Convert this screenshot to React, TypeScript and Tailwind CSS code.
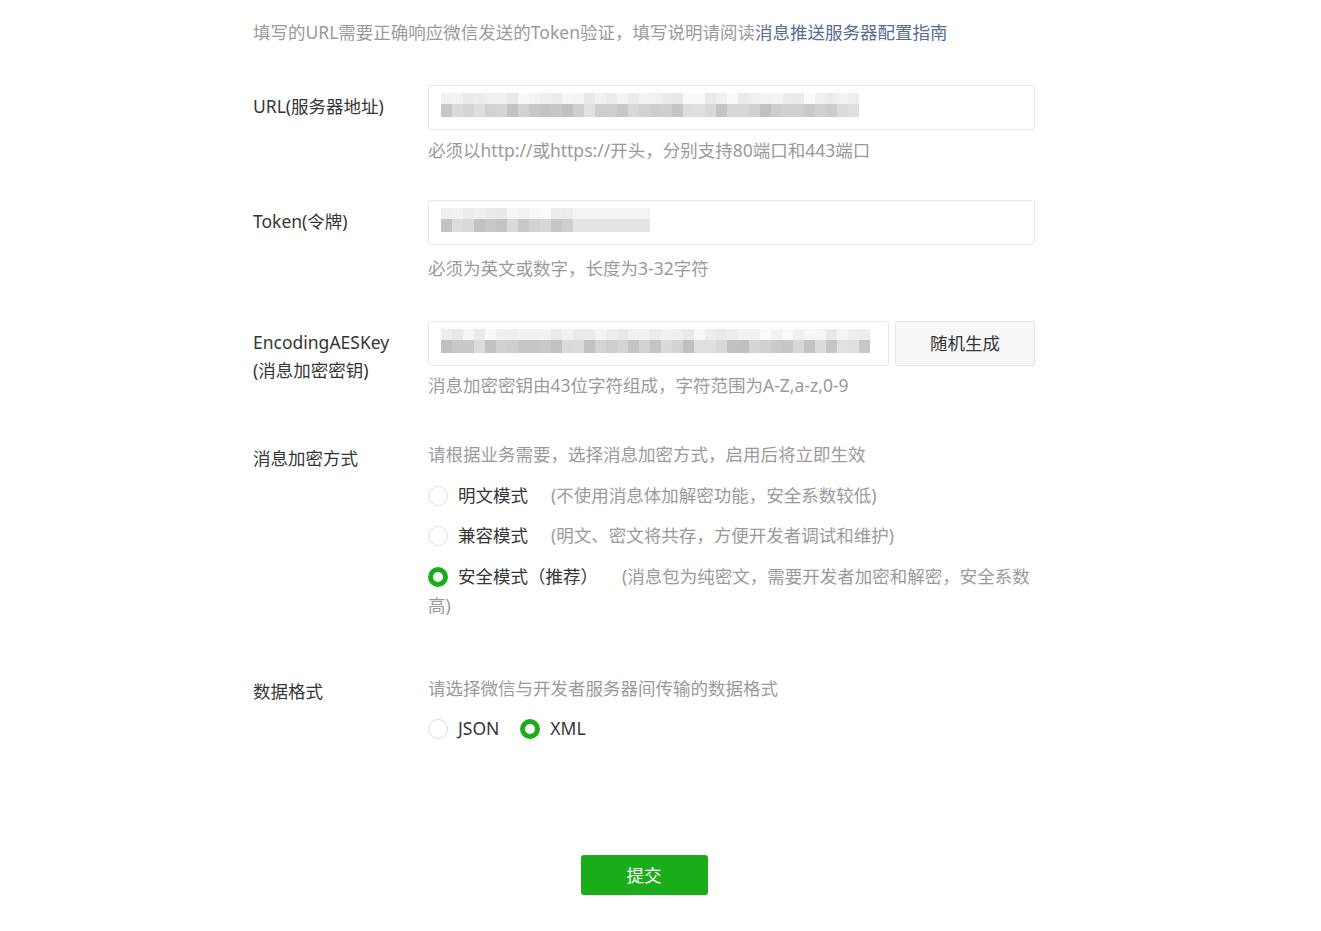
import React from 'react'

const FONT = { fontFamily: '"Noto Sans", "Noto Sans CJK SC", sans-serif' }

// deterministic grey shades for the blurred input values
function shades(n: number, seed: number, lo: number, hi: number) {
  const out: string[] = []
  let s = seed
  for (let i = 0; i < n; i++) {
    s = (s * 9301 + 49297) % 233280
    const v = Math.round(lo + (s / 233280) * (hi - lo))
    out.push(`rgb(${v},${v},${v})`)
  }
  return out
}

function Mosaic({ cells, seed, fadeFrom = 999 }: { cells: number; seed: number; fadeFrom?: number }) {
  const top = shades(cells, seed, 232, 250)
  const bottom = shades(cells, seed + 17, 192, 226)
  return (
    <svg width={cells * 11} height={24} className="block">
      {top.map((c, i) => (
        <rect key={'t' + i} x={i * 11} y={0} width={11} height={11} fill={i >= fadeFrom ? '#f4f4f4' : c} />
      ))}
      {bottom.map((c, i) => (
        <rect key={'b' + i} x={i * 11} y={11} width={11} height={13} fill={i >= fadeFrom ? '#e4e4e4' : c} />
      ))}
    </svg>
  )
}

function Radio({ checked }: { checked?: boolean }) {
  return checked ? (
    <span className="inline-block w-[20px] h-[20px] rounded-full border-[5px] border-[#1aad19] bg-white align-middle mr-[10px] -mt-[3px]" />
  ) : (
    <span className="inline-block w-[20px] h-[20px] rounded-full border border-[#dcdcdc] bg-white align-middle mr-[10px] -mt-[3px]" />
  )
}

interface FieldProps {
  label: React.ReactNode;
  children: React.ReactNode;
  className?: string;
}

function Field({ label, children, className = '' }: FieldProps) {
  return (
    <div className={`flex ${className}`}>
      <div className="w-[175px] shrink-0 pt-[7px] leading-[28px] text-[#353535]">{label}</div>
      <div className="w-[607px]">{children}</div>
    </div>
  )
}

function Input({ children }: { children?: React.ReactNode }) {
  return (
    <div className="h-[45px] border border-[#e7e7eb] rounded-[3px] bg-white pl-[12px] pt-[7px] flex-1">
      {children}
    </div>
  )
}

export default function App() {
  return (
    <div className="min-h-[931px] bg-white text-[17.5px]" style={FONT}>
      <div className="ml-[253px] w-[782px] pt-[20px]">
        <p className="leading-[25px] text-[#9a9a9a]">
          填写的URL需要正确响应微信发送的Token验证，填写说明请阅读
          <span className="text-[#576b95]">消息推送服务器配置指南</span>
        </p>

        <Field label="URL(服务器地址)" className="mt-[40px]">
          <Input>
            <Mosaic cells={38} seed={7} />
          </Input>
          <p className="mt-[8px] leading-[25px] text-[#9a9a9a]">必须以http://或https://开头，分别支持80端口和443端口</p>
        </Field>

        <Field label="Token(令牌)" className="mt-[37px]">
          <Input>
            <Mosaic cells={19} seed={31} fadeFrom={12} />
          </Input>
          <p className="mt-[11px] leading-[25px] text-[#9a9a9a]">必须为英文或数字，长度为3-32字符</p>
        </Field>

        <Field
          label={
            <>
              EncodingAESKey
              <br />
              (消息加密密钥)
            </>
          }
          className="mt-[40px]"
        >
          <div className="flex gap-[6px]">
            <Input>
              <Mosaic cells={39} seed={53} />
            </Input>
            <button className="w-[140px] h-[45px] border border-[#e4e4e4] rounded-[3px] bg-[#f8f8f8] text-[#353535]">
              随机生成
            </button>
          </div>
          <p className="mt-[7px] leading-[25px] text-[#9a9a9a]">消息加密密钥由43位字符组成，字符范围为A-Z,a-z,0-9</p>
        </Field>

        <div className="flex mt-[44px]">
          <div className="w-[175px] shrink-0 pt-[2px] leading-[28px] text-[#353535]">消息加密方式</div>
          <div className="w-[607px]">
            <p className="leading-[25px] text-[#9a9a9a]">请根据业务需要，选择消息加密方式，启用后将立即生效</p>
            <div className="mt-[14px] leading-[29px] text-[#353535]">
              <Radio />
              明文模式
              <span className="ml-[23px] text-[#9a9a9a]">(不使用消息体加解密功能，安全系数较低)</span>
            </div>
            <div className="mt-[11px] leading-[29px] text-[#353535]">
              <Radio />
              兼容模式
              <span className="ml-[23px] text-[#9a9a9a]">(明文、密文将共存，方便开发者调试和维护)</span>
            </div>
            <div className="mt-[12px] leading-[29px] text-[#353535]">
              <Radio checked />
              安全模式（推荐）
              <span className="ml-[24px] text-[#9a9a9a]">(消息包为纯密文，需要开发者加密和解密，安全系数高)</span>
            </div>
          </div>
        </div>

        <div className="flex mt-[56px]">
          <div className="w-[175px] shrink-0 pt-[1px] leading-[28px] text-[#353535]">数据格式</div>
          <div className="w-[607px]">
            <p className="leading-[25px] text-[#9a9a9a]">请选择微信与开发者服务器间传输的数据格式</p>
            <div className="mt-[13px] leading-[29px] text-[#353535]">
              <Radio />
              JSON
              <span className="ml-[21px]">
                <Radio checked />
                XML
              </span>
            </div>
          </div>
        </div>

        <div className="flex justify-center mt-[112px]">
          <button className="w-[127px] h-[40px] rounded-[3px] bg-[#1aad19] text-white">提交</button>
        </div>
      </div>
    </div>
  )
}
